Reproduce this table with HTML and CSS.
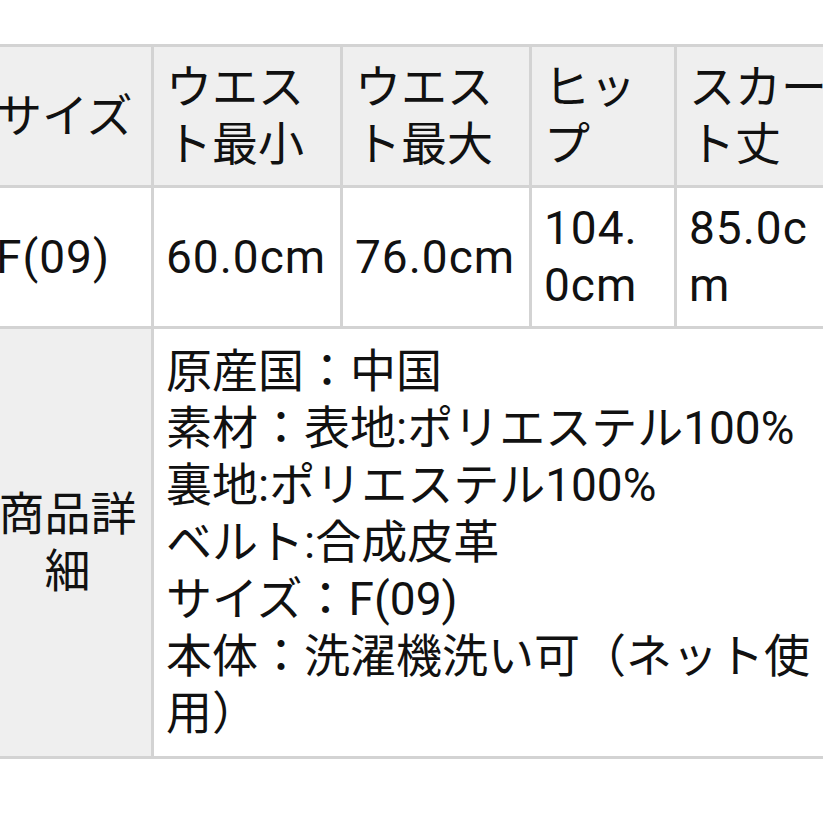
FILE: index.html
```html
<!DOCTYPE html>
<html lang="ja">
<head>
<meta charset="utf-8">
<title>サイズ表</title>
<link rel="stylesheet" href="styles.css">
</head>
<body>
<div class="sheet">
  <div class="cell head">サイズ</div>
  <div class="cell head">ウエスト最小</div>
  <div class="cell head">ウエスト最大</div>
  <div class="cell head">ヒップ</div>
  <div class="cell head">スカート丈</div>

  <div class="cell num">F(09)</div>
  <div class="cell num">60.0cm</div>
  <div class="cell num">76.0cm</div>
  <div class="cell num">104.0cm</div>
  <div class="cell num">85.0cm</div>

  <div class="cell head label">商品詳細</div>
  <div class="cell detail">原産国：中国<br>素材：表地:ポリエステル100%<br>裏地:ポリエステル100%<br>ベルト:合成皮革<br>サイズ：F(09)<br>本体：洗濯機洗い可（ネット使用）</div>
</div>
</body>
</html>
```

FILE: styles.css
```css
html, body {
  margin: 0;
  padding: 0;
  background: #ffffff;
  overflow: hidden;
}

body {
  font-family: Roboto, "Noto Sans CJK JP", sans-serif;
  font-size: 46px;
  line-height: 57px;
  color: #111111;
}

.sheet {
  display: grid;
  grid-template-columns: 167px 186px 186px 142px 176px;
  gap: 3px;
  padding: 3px;
  background: #d3d3d3;
  margin: 44px 0 0 -19px;
  width: max-content;
}

.cell {
  background: #ffffff;
  padding: 12px;
  display: flex;
  align-items: center;
  word-break: break-all;
}

.num {
  letter-spacing: 1px;
}

.head {
  background: #efefef;
}

.label {
  justify-content: center;
  text-align: center;
  padding: 14px 12px;
}

.detail {
  grid-column: span 4;
  display: block;
  padding: 14px 12px;
  word-break: normal;
}
```
